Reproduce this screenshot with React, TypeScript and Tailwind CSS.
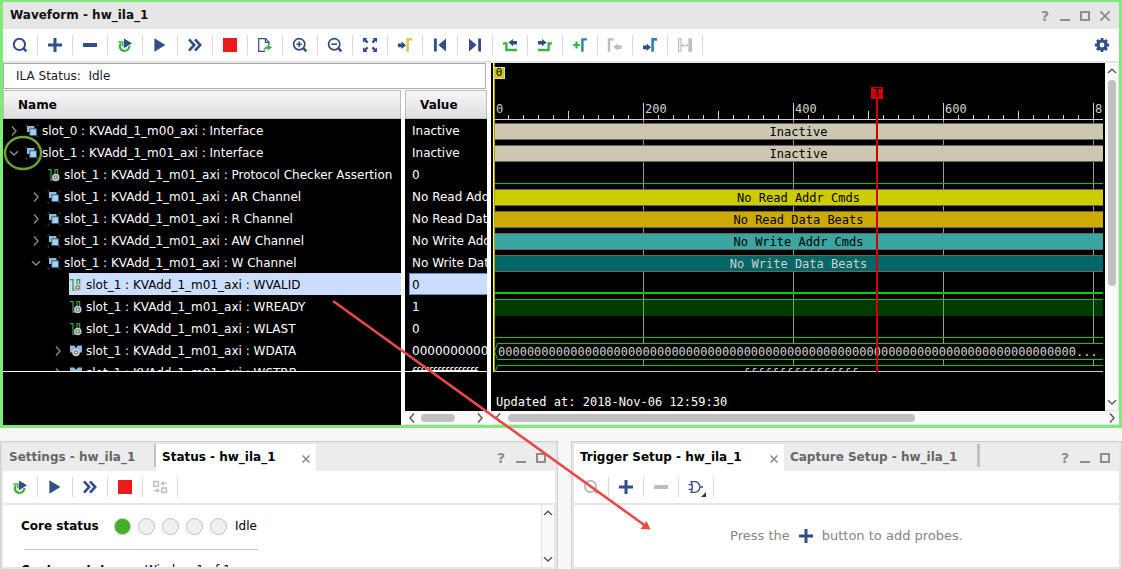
import type { ReactNode } from 'react';

const NAVY = '#2f4f86';
const GREEN = '#3bb13f';
const GREY = '#bdbdbd';

function Icon({ children }: { children: ReactNode }) {
  return (
    <svg width="16" height="16" viewBox="0 0 16 16" fill="none" aria-hidden="true">
      {children}
    </svg>
  );
}

const SearchIcon = ({ color = NAVY }: { color?: string }) => (
  <Icon>
    <circle cx="7.4" cy="7.4" r="5.6" stroke={color} strokeWidth="2" />
    <path d="M11.4 11.4 14.4 14.4" stroke={color} strokeWidth="2.6" />
  </Icon>
);
const PlusIcon = () => (
  <Icon>
    <path d="M8 1V15M1 8H15" stroke={NAVY} strokeWidth="3" />
  </Icon>
);
const MinusIcon = ({ color = NAVY }: { color?: string }) => (
  <Icon>
    <path d="M1 8H15" stroke={color} strokeWidth="4" />
  </Icon>
);
const RestartIcon = () => (
  <Icon>
    <path d="M4 6.4C1.4 9.4 3.6 13.8 7.4 13.8C10.4 13.8 12.4 11.8 12.4 9" stroke={GREEN} strokeWidth="2.2" />
    <path d="M1.4 5H5.8V9.4" stroke={GREEN} strokeWidth="1.5" />
    <path d="M7 1.4 15 6.2 7 11.2Z" fill={NAVY} />
  </Icon>
);
const PlayIcon = () => (
  <Icon>
    <path d="M2.4 1.2 13.4 8 2.4 14.8Z" fill={NAVY} />
  </Icon>
);
const ForwardIcon = () => (
  <Icon>
    <path d="M2 2.4 7.2 8 2 13.6M8 2.4 13.2 8 8 13.6" stroke={NAVY} strokeWidth="2.6" />
  </Icon>
);
const StopIcon = () => (
  <Icon>
    <path d="M1 1H15V15H1Z" fill="#ec1b1b" />
  </Icon>
);
const ExportIcon = () => (
  <Icon>
    <path d="M12 8V5.2L8.6 1.7H1.7V14.3H8M8.4 2V5.4H11.8" stroke={NAVY} strokeWidth="1.2" />
    <path d="M10.6 7.2 15 10.4 10.6 13.6V11.6C8.8 11.6 7.6 12.4 6.6 14.2C6.6 11 8 9.4 10.6 9.2Z" fill={GREEN} />
  </Icon>
);
const ZoomIcon = ({ plus }: { plus?: boolean }) => (
  <Icon>
    <circle cx="7.2" cy="7.2" r="5.6" stroke={NAVY} strokeWidth="1.7" />
    <path d="M11.4 11.4 14.4 14.4" stroke={NAVY} strokeWidth="2.6" />
    <path d={plus ? 'M7.2 4.4V10M4.4 7.2H10' : 'M4.4 7.2H10'} stroke={NAVY} strokeWidth="1.6" />
  </Icon>
);
const FitIcon = () => (
  <Icon>
    <path
      d="M1 1H5.4L4.2 2.6 6.4 4.8 4.8 6.4 2.6 4.2 1 5.4ZM15 1V5.4L13.4 4.2 11.2 6.4 9.6 4.8 11.8 2.6 10.6 1ZM1 15V10.6L2.6 11.8 4.8 9.6 6.4 11.2 4.2 13.4 5.4 15ZM15 15H10.6L11.8 13.4 9.6 11.2 11.2 9.6 13.4 11.8 15 10.6Z"
      fill={NAVY}
    />
  </Icon>
);
const GoToIcon = ({ edge, low }: { edge: string; low?: boolean }) => (
  <Icon>
    <path
      d={low ? 'M1 8.4H4.6V6.4L9 10.2 4.6 14V12.2H1Z' : 'M1 6.4H4.6V4.4L9 8.2 4.6 12V10.2H1Z'}
      fill={NAVY}
    />
    <path d="M10.6 14.8V2.4H15" stroke={edge} strokeWidth="2.6" />
  </Icon>
);
const FirstIcon = () => (
  <Icon>
    <path d="M2 1.4H4.8V14.6H2ZM14 1.4V14.6L6.4 8Z" fill={NAVY} />
  </Icon>
);
const LastIcon = () => (
  <Icon>
    <path d="M11.2 1.4H14V14.6H11.2ZM2 1.4V14.6L9.6 8Z" fill={NAVY} />
  </Icon>
);
const PrevEdgeIcon = () => (
  <Icon>
    <path d="M1 6.4H4.4V13H15" stroke={GREEN} strokeWidth="2.4" />
    <path d="M15 4H11V2L6.4 5.6 11 9.2V7.4H15Z" fill={NAVY} />
  </Icon>
);
const NextEdgeIcon = () => (
  <Icon>
    <path d="M15 6.4H11.6V13H1" stroke={GREEN} strokeWidth="2.4" />
    <path d="M1 4H5V2L9.6 5.6 5 9.2V7.4H1Z" fill={NAVY} />
  </Icon>
);
const AddMarkerIcon = () => (
  <Icon>
    <path d="M4.5 4.6V11.4M1.1 8H7.9" stroke={GREEN} strokeWidth="2.2" />
    <path d="M10.4 14.8V2.4H15" stroke="#2e80b8" strokeWidth="2.4" />
  </Icon>
);
const PrevMarkerIcon = () => (
  <Icon>
    <path d="M2 14.8V2.4H7" stroke={GREY} strokeWidth="2.4" />
    <path d="M14.6 8.2H10.8V6.2L6.2 10 10.8 13.8V12H14.6Z" fill={GREY} />
  </Icon>
);
const MeasureIcon = () => (
  <Icon>
    <path d="M1.6 1.8H4V14.2H1.6ZM12 1.8H14.4V14.2H12Z" stroke={GREY} strokeWidth="1.2" />
    <path d="M13.2 2V14" stroke={GREY} strokeWidth="2" />
    <path d="M5 8.4H11M6.6 6.6 5 8.4 6.6 10.2M9.4 6.6 11 8.4 9.4 10.2" stroke={GREY} />
  </Icon>
);
const SwapIcon = () => (
  <Icon>
    <path d="M1.8 2.6H6.4V7.2H1.8ZM9.8 9H14.4V13.6H9.8Z" stroke={GREY} strokeWidth="1.5" />
    <path d="M10.6 4.4H14.6M1.6 11.6H6" stroke={GREY} strokeWidth="1.4" />
    <path d="M11.8 1.8V7L8.6 4.4ZM4.6 9V14.2L7.8 11.6Z" fill={GREY} />
  </Icon>
);
const GateIcon = () => (
  <svg width="20" height="20" viewBox="0 0 20 20" fill="none" aria-hidden="true">
    <path d="M5.2 4.6H8.4C12 4.6 13.6 7.4 14 10C13.6 12.6 12 15.4 8.4 15.4H5.2C6.6 12 6.6 8 5.2 4.6Z" stroke={NAVY} strokeWidth="1.4" />
    <path d="M2.6 7.6H6M2.6 12.4H6M14 10H17" stroke={NAVY} strokeWidth="1.4" />
    <path d="M20 15V20H15Z" fill="#333" />
  </svg>
);
const GearIcon = () => (
  <Icon>
    <circle cx="8" cy="8" r="4" stroke={NAVY} strokeWidth="3.2" />
    <path
      d="M8 .9V3.4M8 12.6V15.1M.9 8H3.4M12.6 8H15.1M3 3 4.8 4.8M11.2 11.2 13 13M3 13 4.8 11.2M11.2 4.8 13 3"
      stroke={NAVY}
      strokeWidth="2.8"
    />
  </Icon>
);

function ToolButton({ label, children, disabled }: { label: string; children: ReactNode; disabled?: boolean }) {
  return (
    <div className="flex h-5 w-[35px] shrink-0 border-r border-[#dadada]">
      <button type="button" aria-label={label} disabled={disabled} className="flex flex-1 items-center justify-center">
        {children}
      </button>
    </div>
  );
}

function WindowButtons({ closable }: { closable?: boolean }) {
  return (
    <div className="flex shrink-0 text-[#8e8e8e]">
      <button type="button" aria-label="Help" className="flex h-5 w-5 items-center justify-center text-sm leading-5 font-bold">
        ?
      </button>
      <button type="button" aria-label="Minimize" className="flex h-5 w-5 items-center justify-center">
        <Icon>
          <path d="M3 12H13" stroke="currentColor" strokeWidth="2" />
        </Icon>
      </button>
      <button type="button" aria-label="Maximize" className="flex h-5 w-5 items-center justify-center">
        <Icon>
          <path d="M4 4H12V12H4Z" stroke="currentColor" strokeWidth="2" />
        </Icon>
      </button>
      {closable && (
        <button type="button" aria-label="Close" className="flex h-5 w-5 items-center justify-center">
          <Icon>
            <path d="M3.4 3.4 12.6 12.6M12.6 3.4 3.4 12.6" stroke="currentColor" strokeWidth="2" />
          </Icon>
        </button>
      )}
    </div>
  );
}

const chevronPaths = {
  right: 'M4 1.5 8 6 4 10.5',
  left: 'M8 1.5 4 6 8 10.5',
  up: 'M2 8 6 4.2 10 8',
  down: 'M2 4.2 6 8 10 4.2',
};

function Chevron({ dir }: { dir: keyof typeof chevronPaths }) {
  return (
    <svg width="12" height="12" viewBox="0 0 12 12" fill="none" aria-hidden="true">
      <path d={chevronPaths[dir]} stroke="currentColor" strokeWidth="1.4" />
    </svg>
  );
}

const BusIcon = () => (
  <svg width="14" height="14" viewBox="0 0 14 14" fill="none" aria-hidden="true">
    <path d="M1 2.6V1H2.6M11.6 1H13V2.4M1 11.6V13H2.4M11.6 13H13V11.6" stroke="#4a4a4a" />
    <path d="M2 2H9.4V8H2Z" fill="#8fbcd8" />
    <path d="M4.8 4.8H11.6V11.6H4.8Z" fill="#a9d0ea" stroke="#2f5e8c" />
  </svg>
);
const SignalIcon = () => (
  <svg width="14" height="14" viewBox="0 0 14 14" fill="none" aria-hidden="true">
    <path d="M1 1.6H4V12H6.4M8 8V1.6H10.6V7" stroke="#2f9e49" strokeWidth="1.3" />
    <circle cx="8.8" cy="9.6" r="3" fill="#777" stroke="#c9c9c9" strokeWidth="1.5" />
    <circle cx="8.8" cy="9.6" r="1" fill="#eee" />
  </svg>
);
const VectorIcon = () => (
  <svg width="14" height="14" viewBox="0 0 14 14" fill="none" aria-hidden="true">
    <path d="M1 1.6H5.2L7 4 8.8 1.6H13V8.4H1Z" fill="#8bb9d6" />
    <circle cx="7" cy="8.4" r="3" fill="#777" stroke="#d4d4d4" strokeWidth="1.5" />
    <circle cx="7" cy="8.4" r="1" fill="#eee" />
  </svg>
);

const icons = { bus: <BusIcon />, signal: <SignalIcon />, vector: <VectorIcon /> };
const indents = ['pl-[3px]', 'pl-[25px]', 'pl-[47px]'];

type Signal = {
  name: string;
  value: string;
  level: number;
  icon: keyof typeof icons;
  expand?: 'right' | 'down';
  selected?: boolean;
};

const signals: Signal[] = [
  { name: 'slot_0 : KVAdd_1_m00_axi : Interface', value: 'Inactive', level: 0, icon: 'bus', expand: 'right' },
  { name: 'slot_1 : KVAdd_1_m01_axi : Interface', value: 'Inactive', level: 0, icon: 'bus', expand: 'down' },
  { name: 'slot_1 : KVAdd_1_m01_axi : Protocol Checker Assertion', value: '0', level: 1, icon: 'signal' },
  { name: 'slot_1 : KVAdd_1_m01_axi : AR Channel', value: 'No Read Addr Cmds', level: 1, icon: 'bus', expand: 'right' },
  { name: 'slot_1 : KVAdd_1_m01_axi : R Channel', value: 'No Read Data Beats', level: 1, icon: 'bus', expand: 'right' },
  { name: 'slot_1 : KVAdd_1_m01_axi : AW Channel', value: 'No Write Addr Cmds', level: 1, icon: 'bus', expand: 'right' },
  { name: 'slot_1 : KVAdd_1_m01_axi : W Channel', value: 'No Write Data Beats', level: 1, icon: 'bus', expand: 'down' },
  { name: 'slot_1 : KVAdd_1_m01_axi : WVALID', value: '0', level: 2, icon: 'signal', selected: true },
  { name: 'slot_1 : KVAdd_1_m01_axi : WREADY', value: '1', level: 2, icon: 'signal' },
  { name: 'slot_1 : KVAdd_1_m01_axi : WLAST', value: '0', level: 2, icon: 'signal' },
  { name: 'slot_1 : KVAdd_1_m01_axi : WDATA', value: '0'.repeat(11), level: 2, icon: 'vector', expand: 'right' },
  { name: 'slot_1 : KVAdd_1_m01_axi : WSTRB', value: 'f'.repeat(16), level: 2, icon: 'vector', expand: 'right' },
];

const headCell =
  'h-[29px] border border-[#bdbdbd] bg-linear-to-b from-[#f6f6f6] to-[#dfdfe2] p-0 pl-3.5 text-left font-bold text-black';

function NameTable() {
  return (
    <div className="flex min-w-0 flex-1 flex-col bg-black text-white">
      <div className="h-[281px] overflow-hidden">
        <table className="w-full table-fixed border-separate border-spacing-0">
          <thead>
            <tr>
              <th className={headCell}>Name</th>
            </tr>
          </thead>
          <tbody>
            {signals.map((s) => (
              <tr key={s.name}>
                <td className="p-0">
                  <div className={`flex h-[22px] items-center ${indents[s.level]}`}>
                    <span className="flex w-[19px] shrink-0 pt-0.5 pl-0.5 text-[#8a8a8a]">
                      {s.expand && (
                        <button type="button" aria-label={s.expand === 'right' ? 'Expand' : 'Collapse'}>
                          <Chevron dir={s.expand} />
                        </button>
                      )}
                    </span>
                    <span
                      className={`flex h-full min-w-0 flex-1 items-center gap-[3px] overflow-hidden pt-0.5 whitespace-nowrap ${
                        s.selected ? 'bg-[#ccdeff] text-black' : ''
                      }`}
                    >
                      <span className="shrink-0">{icons[s.icon]}</span>
                      {s.name}
                    </span>
                  </div>
                </td>
              </tr>
            ))}
          </tbody>
        </table>
      </div>
      <div className="flex-1 border-t border-white" />
    </div>
  );
}

function ValueTable() {
  return (
    <div className="flex w-[82px] shrink-0 flex-col bg-black text-white">
      <div className="h-[281px] overflow-hidden">
        <table className="w-full table-fixed border-separate border-spacing-0">
          <thead>
            <tr>
              <th className={headCell}>Value</th>
            </tr>
          </thead>
          <tbody>
            {signals.map((s) => (
              <tr key={s.name}>
                <td className="p-0 pl-1">
                  <div
                    className={`flex h-[22px] items-center overflow-hidden border border-r-0 pt-0.5 pl-0.5 whitespace-nowrap ${
                      s.selected ? 'border-[#4b98d0] bg-[#ccdeff] text-black' : 'border-transparent'
                    }`}
                  >
                    {s.value}
                  </div>
                </td>
              </tr>
            ))}
          </tbody>
        </table>
      </div>
      <div className="flex-1 border-t border-white" />
      <div className="flex h-3.5 items-center justify-between border-b border-[#e2e2e2] bg-[#fafafa] px-px text-[#555]">
        <button type="button" aria-label="Scroll left">
          <Chevron dir="left" />
        </button>
        <div className="mr-4 h-2 w-[34px] rounded-full bg-[#c1c1c1]" />
        <button type="button" aria-label="Scroll right">
          <Chevron dir="right" />
        </button>
      </div>
    </div>
  );
}

const bars: Record<string, string> = {
  beige: 'bg-[#cdc6b0] text-black',
  yellow: 'bg-[#cccc00] text-black',
  amber: 'bg-[#ccaa00] text-black',
  teal: 'bg-[#3ba6a1] text-black',
  deep: 'bg-[#006666] text-[#d0d0d0]',
};

function Bar({ tone, children }: { tone: string; children: ReactNode }) {
  return (
    <div className="h-[22px] pt-[3px]">
      <div className={`flex h-[17px] items-center justify-center border-y border-[#666] ${bars[tone]}`}>{children}</div>
    </div>
  );
}

function BusWave({ children }: { children: ReactNode }) {
  return (
    <div className="h-[22px] pt-[3px]">
      <div className="flex h-[17px]">
        <svg width="4" height="17" viewBox="0 0 4 17" fill="none" className="shrink-0" aria-hidden="true">
          <path d="M4 0.5H3.5L0.5 8.5 3.5 16.5H4" stroke="#00cc00" />
        </svg>
        <div className="flex h-[17px] min-w-0 flex-1 items-center overflow-hidden border-y border-[#00cc00] bg-black whitespace-nowrap text-[#d0d0d0]">
          {children}
        </div>
      </div>
    </div>
  );
}

const majorTicks = [
  { x: 150, label: '200' },
  { x: 300, label: '400' },
  { x: 450, label: '600' },
  { x: 600, label: '800' },
];
const minorTicks = Array.from({ length: 40 }, (_, i) => i + 1).filter((i) => i % 10 !== 0);

function Waves() {
  return (
    <div className="relative flex h-[348px] min-w-0 flex-1 flex-col bg-black pr-0.5 pl-[3px] font-['DejaVu_Sans_Mono','Liberation_Mono',monospace]">
      <div className="relative h-[309px] overflow-hidden border-b border-[#c8c8c8]">
        <svg width="100%" height="308" className="absolute inset-0" aria-hidden="true">
          <g stroke="#999">
            {majorTicks.map((t) => (
              <path key={t.x} d={`M${t.x - 0.5} 56V308`} />
            ))}
          </g>
          <g stroke="#d0d0d0">
            <path d="M0 56.5H2000" />
            {majorTicks.map((t) => (
              <path key={t.x} d={`M${t.x - 0.5} 40V56`} />
            ))}
            {minorTicks.map((i) => (
              <path key={i} d={i % 5 === 0 ? `M${i * 15 - 0.5} 48V56` : `M${i * 15 - 0.5} 52V56`} />
            ))}
          </g>
          <g fill="#d0d0d0">
            <text x="2" y="50">0</text>
            {majorTicks.map((t) => (
              <text key={t.x} x={t.x + 1} y="50">
                {t.label}
              </text>
            ))}
          </g>
        </svg>
        <div className="relative pt-[57px]">
          <Bar tone="beige">Inactive</Bar>
          <Bar tone="beige">Inactive</Bar>
          <div className="h-[22px] pt-[19px]">
            <div className="h-px bg-[#00c800]" />
          </div>
          <Bar tone="yellow">No Read Addr Cmds</Bar>
          <Bar tone="amber">No Read Data Beats</Bar>
          <Bar tone="teal">No Write Addr Cmds</Bar>
          <Bar tone="deep">No Write Data Beats</Bar>
          <div className="h-[22px] pt-[18px]">
            <div className="h-0.5 bg-[#00d000]" />
          </div>
          <div className="h-[22px] pt-[3px]">
            <div className="h-[17px] border-t border-[#00c800] bg-[#00c800]/30" />
          </div>
          <div className="h-[22px] pt-[19px]">
            <div className="h-px bg-[#00c800]" />
          </div>
          <BusWave>{`${'0'.repeat(80)}...`}</BusWave>
          <BusWave>
            <span className="w-full text-center">{'f'.repeat(16)}</span>
          </BusWave>
        </div>
      </div>
      <div className="flex-1 pt-[22px] pl-0.5 leading-4 text-white">Updated at: 2018-Nov-06 12:59:30</div>

      <div className="absolute top-0 left-0.5 h-[309px] w-0.5 border-l border-[#ffff33] bg-[#b0a000]" />
      <div className="absolute top-1 left-0.5 flex h-3 w-3 items-center justify-center border border-[#d8d8d8] bg-[#cccc00] text-[11px] leading-3 text-black">
        0
      </div>
      <div className="absolute top-6 left-[380px] flex h-[285px] w-3 flex-col items-center">
        <div className="flex h-3 w-3 items-center justify-center bg-[#cc0000] leading-3 text-black">T</div>
        <div className="w-0.5 flex-1 bg-[#cc0000]" />
      </div>
    </div>
  );
}

function WaveformPanel() {
  return (
    <section className="border-x-[3px] border-t-2 border-b-[3px] border-[#7fe97a] bg-white">
      <header className="flex h-[27px] items-center justify-between bg-[#e6e6e6] pr-1 pl-[7px]">
        <h1 className="pb-0.5 font-bold text-[#111]">Waveform - hw_ila_1</h1>
        <WindowButtons closable />
      </header>
      <div className="flex h-[34px] items-center border-b-2 border-[#e6e6e6]">
        <ToolButton label="Search"><SearchIcon /></ToolButton>
        <ToolButton label="Add"><PlusIcon /></ToolButton>
        <ToolButton label="Remove"><MinusIcon /></ToolButton>
        <ToolButton label="Toggle auto re-trigger"><RestartIcon /></ToolButton>
        <ToolButton label="Run trigger"><PlayIcon /></ToolButton>
        <ToolButton label="Run trigger immediate"><ForwardIcon /></ToolButton>
        <ToolButton label="Stop trigger"><StopIcon /></ToolButton>
        <ToolButton label="Export data"><ExportIcon /></ToolButton>
        <ToolButton label="Zoom in"><ZoomIcon plus /></ToolButton>
        <ToolButton label="Zoom out"><ZoomIcon /></ToolButton>
        <ToolButton label="Zoom fit"><FitIcon /></ToolButton>
        <ToolButton label="Go to cursor"><GoToIcon edge="#e0c55c" /></ToolButton>
        <ToolButton label="Go to start"><FirstIcon /></ToolButton>
        <ToolButton label="Go to end"><LastIcon /></ToolButton>
        <ToolButton label="Previous transition"><PrevEdgeIcon /></ToolButton>
        <ToolButton label="Next transition"><NextEdgeIcon /></ToolButton>
        <ToolButton label="Add marker"><AddMarkerIcon /></ToolButton>
        <ToolButton label="Previous marker" disabled><PrevMarkerIcon /></ToolButton>
        <ToolButton label="Next marker"><GoToIcon edge="#2e80b8" low /></ToolButton>
        <ToolButton label="Measure" disabled><MeasureIcon /></ToolButton>
        <button type="button" aria-label="Settings" className="mr-[9px] ml-auto">
          <GearIcon />
        </button>
      </div>
      <div className="flex">
        <div className="flex w-[484px] shrink-0 flex-col">
          <div className="mr-px mb-px flex h-[26px] items-center border border-[#ababab] pl-3 text-[#1c1c1c]">ILA Status:&nbsp;&nbsp;Idle</div>
          <div className="flex flex-1 gap-1">
            <NameTable />
            <ValueTable />
          </div>
        </div>
        <div className="ml-1 flex min-w-0 flex-1 flex-col">
          <div className="flex">
            <Waves />
            <div className="flex w-3.5 flex-col items-center border-r border-b border-[#e2e2e2] bg-[#fafafa] text-[#555]">
              <button type="button" aria-label="Scroll up" className="py-0.5">
                <Chevron dir="up" />
              </button>
              <div className="mt-px h-[206px] w-2 rounded-full bg-[#c1c1c1]" />
              <button type="button" aria-label="Scroll down" className="mt-auto py-0.5">
                <Chevron dir="down" />
              </button>
            </div>
          </div>
          <div className="flex h-3.5 items-center border-b border-[#e2e2e2] bg-[#fafafa] px-px text-[#555]">
            <button type="button" aria-label="Scroll left">
              <Chevron dir="left" />
            </button>
            <div className="ml-1 h-2 w-[65%] rounded-full bg-[#c1c1c1]" />
            <button type="button" aria-label="Scroll right" className="ml-auto">
              <Chevron dir="right" />
            </button>
          </div>
        </div>
      </div>
    </section>
  );
}

function CloseTab() {
  return (
    <button type="button" aria-label="Close tab" className="pt-0.5">
      <svg width="10" height="10" viewBox="0 0 10 10" fill="none" aria-hidden="true">
        <path d="M1.5 1.5 8.5 8.5M8.5 1.5 1.5 8.5" stroke="#8a8a8a" strokeWidth="1.6" />
      </svg>
    </button>
  );
}

const panelFrame = 'flex min-w-0 flex-col border border-b-0 border-[#cfcfcf] bg-[#e6e6e6] p-0.5';

function StatusPanel() {
  return (
    <section className={`${panelFrame} flex-[558]`}>
      <header className="flex h-[27px] shrink-0 items-center justify-between bg-[#ececec] pr-1 font-bold">
        <div role="tablist" className="flex h-full">
          <button type="button" role="tab" aria-selected="false" className="h-full w-[151px] pb-0.5 pl-1.5 text-left text-[#666]">
            Settings - hw_ila_1
          </button>
          <div className="h-[23px] w-0.5 bg-[#c0c0c0]" />
          <div className="flex w-40 items-center justify-between bg-white pr-[5px] pl-1.5">
            <button type="button" role="tab" aria-selected="true" className="pb-0.5">
              Status - hw_ila_1
            </button>
            <CloseTab />
          </div>
        </div>
        <WindowButtons />
      </header>
      <div className="flex h-[34px] shrink-0 items-center border-b-2 border-[#e6e6e6] bg-white">
        <ToolButton label="Toggle auto re-trigger"><RestartIcon /></ToolButton>
        <ToolButton label="Run trigger"><PlayIcon /></ToolButton>
        <ToolButton label="Run trigger immediate"><ForwardIcon /></ToolButton>
        <ToolButton label="Stop trigger"><StopIcon /></ToolButton>
        <ToolButton label="Swap layout" disabled><SwapIcon /></ToolButton>
      </div>
      <div className="flex min-h-0 flex-1 overflow-hidden bg-white">
        <div className="flex-1 overflow-hidden pt-[11px] pl-[18px]">
          <div className="flex h-5 items-center">
            <span className="w-[93px] font-bold">Core status</span>
            <div className="flex gap-[7px]">
              <span className="h-[17px] w-[17px] rounded-full border border-[#bdbdbd] bg-[#43b02a]" />
              <span className="h-[17px] w-[17px] rounded-full border border-[#bdbdbd] bg-[#f0f0f0]" />
              <span className="h-[17px] w-[17px] rounded-full border border-[#bdbdbd] bg-[#f0f0f0]" />
              <span className="h-[17px] w-[17px] rounded-full border border-[#bdbdbd] bg-[#f0f0f0]" />
              <span className="h-[17px] w-[17px] rounded-full border border-[#bdbdbd] bg-[#f0f0f0]" />
            </div>
            <span className="pl-2">Idle</span>
          </div>
          <div className="mt-[13px] ml-[3px] h-px w-[234px] bg-[#c8c8c8]" />
          <div className="flex pt-2.5 leading-5">
            <span className="w-[124px] font-bold">Capture status</span>
            <span>Window 1 of 1</span>
          </div>
        </div>
        <div className="flex w-3.5 flex-col items-center justify-between border-x border-[#e2e2e2] bg-[#fafafa] text-[#555]">
          <button type="button" aria-label="Scroll up" className="py-0.5">
            <Chevron dir="up" />
          </button>
          <button type="button" aria-label="Scroll down" className="py-0.5">
            <Chevron dir="down" />
          </button>
        </div>
      </div>
    </section>
  );
}

function TriggerPanel() {
  return (
    <section className={`${panelFrame} flex-[551]`}>
      <header className="flex h-[27px] shrink-0 items-center justify-between bg-[#ececec] pr-1 font-bold">
        <div role="tablist" className="flex h-full">
          <div className="flex w-[210px] items-center justify-between bg-white pr-[5px] pl-1.5">
            <button type="button" role="tab" aria-selected="true" className="pb-0.5">
              Trigger Setup - hw_ila_1
            </button>
            <CloseTab />
          </div>
          <button type="button" role="tab" aria-selected="false" className="h-full w-[193px] pb-0.5 pl-1.5 text-left text-[#666]">
            Capture Setup - hw_ila_1
          </button>
          <div className="h-[23px] w-[3px] bg-[#c0c0c0]" />
        </div>
        <WindowButtons />
      </header>
      <div className="flex h-[34px] shrink-0 items-center border-b-2 border-[#e6e6e6] bg-white">
        <ToolButton label="Search" disabled><SearchIcon color={GREY} /></ToolButton>
        <ToolButton label="Add probe"><PlusIcon /></ToolButton>
        <ToolButton label="Remove probe" disabled><MinusIcon color={GREY} /></ToolButton>
        <ToolButton label="Trigger condition"><GateIcon /></ToolButton>
      </div>
      <p className="flex min-h-0 flex-1 items-center justify-center gap-2 bg-white text-[13px] text-[#858585]">
        Press the <PlusIcon /> button to add probes.
      </p>
    </section>
  );
}

export default function App() {
  return (
    <main className="relative flex h-screen flex-col overflow-hidden bg-[#f7f7f7] font-['DejaVu_Sans','Noto_Sans',sans-serif] text-xs text-black">
      <WaveformPanel />
      <div className="mt-[13px] flex min-h-0 flex-1 gap-[13px]">
        <StatusPanel />
        <TriggerPanel />
      </div>
      <svg className="pointer-events-none absolute inset-0 h-full w-full" fill="none" aria-hidden="true">
        <ellipse cx="23" cy="153" rx="18" ry="16" stroke="#6aa82c" strokeWidth="2.4" />
        <path d="M333 301 645 525.5" stroke="#e84b45" strokeWidth="2.6" />
        <path d="M650.5 529.5 646.5 521 640.5 529Z" fill="#e84b45" />
      </svg>
    </main>
  );
}
